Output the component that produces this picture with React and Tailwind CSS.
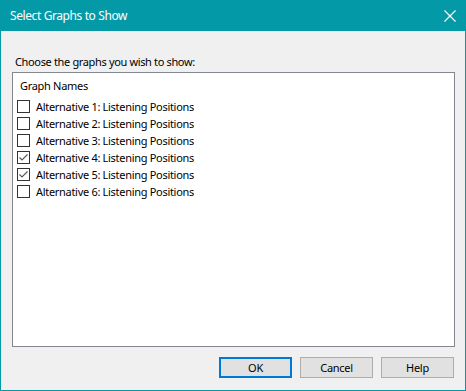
import React from "react";

const items = [
  { label: "Alternative 1: Listening Positions", checked: false },
  { label: "Alternative 2: Listening Positions", checked: false },
  { label: "Alternative 3: Listening Positions", checked: false },
  { label: "Alternative 4: Listening Positions", checked: true },
  { label: "Alternative 5: Listening Positions", checked: true },
  { label: "Alternative 6: Listening Positions", checked: false },
];

function Box({ checked }) {
  return (
    <div className="w-[13px] h-[13px] border border-[#333333] bg-white flex items-center justify-center shrink-0">
      {checked && (
        <svg width="11" height="11" viewBox="0 0 11 11">
          <polyline points="1.5,5.5 4,8 9.5,2.5" fill="none" stroke="#5a5a5a" strokeWidth="1.2" />
        </svg>
      )}
    </div>
  );
}

export default function App() {
  return (
    <div
      className="w-[466px] h-[391px] border border-[#0499a6] bg-[#f0f0f0] flex flex-col text-[11px] tracking-[-0.3px] text-black"
      style={{ fontFamily: '"Noto Sans", "Open Sans", sans-serif' }}
    >
      <div className="h-[30px] bg-[#0499a6] flex items-center justify-between pl-[9px] pr-[9px] shrink-0">
        <span className="text-white text-[12px] tracking-[-0.4px] leading-none">Select Graphs to Show</span>
        <svg width="12" height="12" viewBox="0 0 12 12">
          <path d="M0.5 0.5 L11.5 11.5 M11.5 0.5 L0.5 11.5" stroke="white" strokeWidth="1.2" />
        </svg>
      </div>
      <div className="flex flex-col pl-[11px] pr-[10px] pt-[23px]">
        <div className="h-[16px] leading-[16px] pl-[3px] tracking-[-0.35px]">Choose the graphs you wish to show:</div>
        <div className="mt-[2px] h-[275px] border border-[#828790] bg-white pt-[5px] pl-[4px]">
          <div className="h-[16px] leading-[16px] pl-[3px]">Graph Names</div>
          <div className="mt-[5px] flex flex-col">
            {items.map((it) => (
              <div key={it.label} className="h-[17px] flex items-start pt-[1px] gap-[6px]">
                <Box checked={it.checked} />
                <span className="leading-[14px]">{it.label}</span>
              </div>
            ))}
          </div>
        </div>
        <div className="mt-[10px] flex justify-end gap-[8px] pr-[1px]">
          <button className="w-[73px] h-[21px] border-2 border-[#0078d7] bg-[#e1e1e1] leading-none">OK</button>
          <button className="w-[73px] h-[21px] border border-[#adadad] bg-[#e1e1e1] leading-none">Cancel</button>
          <button className="w-[73px] h-[21px] border border-[#adadad] bg-[#e1e1e1] leading-none">Help</button>
        </div>
      </div>
    </div>
  );
}
